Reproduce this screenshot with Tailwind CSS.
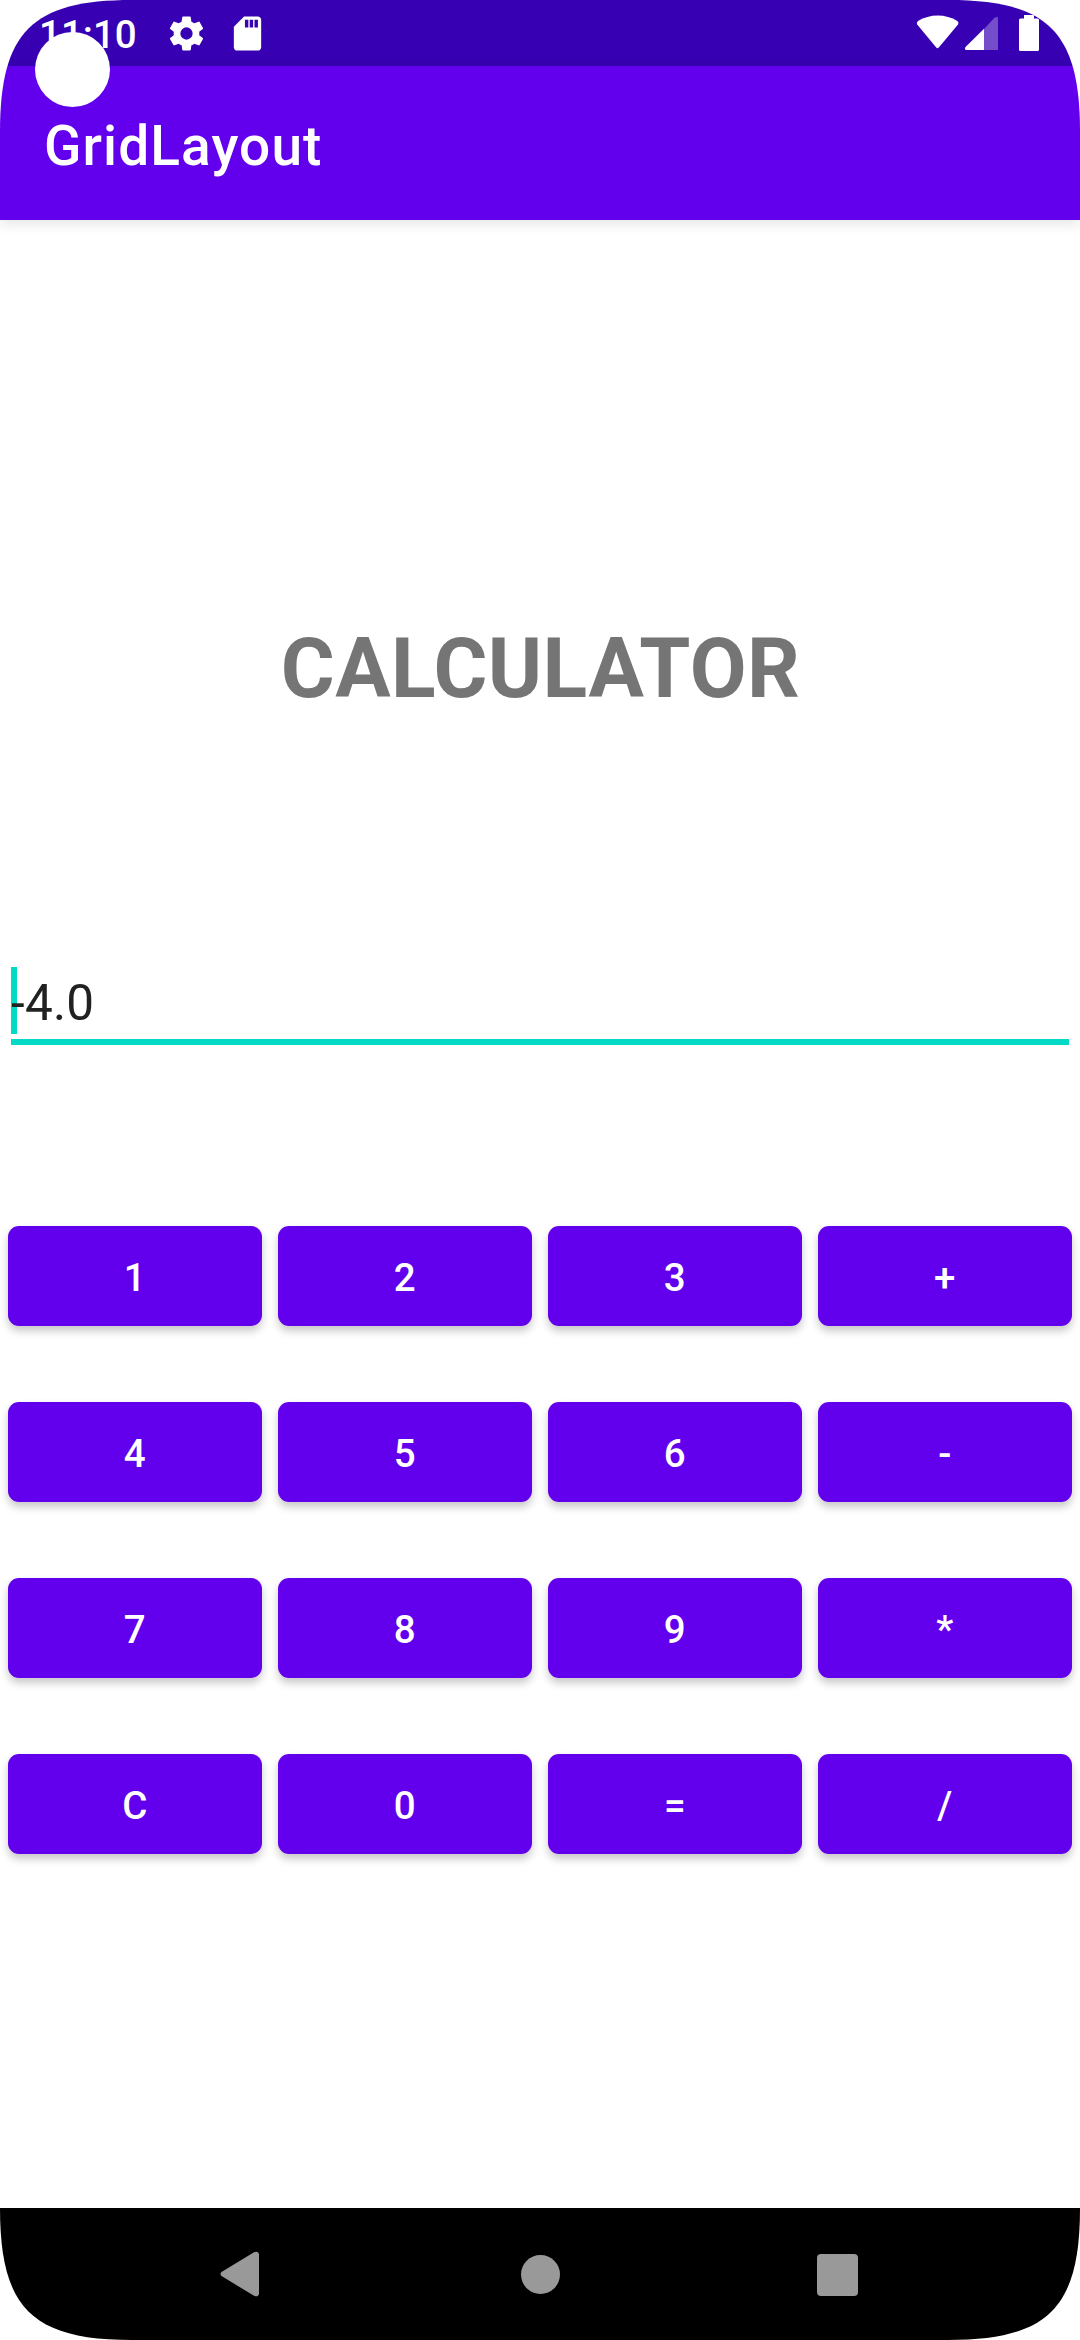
<!DOCTYPE html>
<html lang="en">
<head>
<meta charset="utf-8">
<title>GridLayout</title>
<script src="https://cdn.jsdelivr.net/npm/@tailwindcss/browser@4"></script>
</head>
<body class="bg-white">
<div class="relative flex h-[2340px] w-[1080px] flex-col overflow-hidden bg-white font-[Roboto,sans-serif] [clip-path:path('M0_132C0_32_32_0_132_0H948C1048_0_1080_32_1080_132V2208C1080_2308_1048_2340_948_2340H132C32_2340_0_2308_0_2208Z')]">

  <!-- Status bar -->
  <div class="flex h-[66px] shrink-0 items-center justify-between bg-[#3700b3] pr-[41px] pl-[39px] text-white">
    <div class="flex items-center">
      <span class="w-[127px] pt-[3px] text-[38.5px] leading-[66px] font-medium">11:10</span>
      <svg class="h-[41px] w-[41px]" viewBox="0 0 24 24" fill="currentColor"><path d="M19.5 12c0-.34-.03-.66-.07-.98l2.11-1.65c.19-.15.24-.42.12-.64l-2-3.46c-.12-.22-.39-.3-.61-.22l-2.49 1c-.52-.4-1.08-.73-1.69-.98l-.38-2.65A.49.49 0 0 0 14 2h-4c-.25 0-.46.18-.49.42l-.38 2.65c-.61.25-1.17.59-1.69.98l-2.49-1c-.23-.09-.49 0-.61.22l-2 3.46c-.13.22-.07.49.12.64l2.11 1.65c-.04.32-.07.65-.07.98s.03.66.07.98l-2.11 1.65c-.19.15-.24.42-.12.64l2 3.46c.12.22.39.3.61.22l2.49-1c.52.4 1.08.73 1.69.98l.38 2.65c.03.24.24.42.49.42h4c.25 0 .46-.18.49-.42l.38-2.65c.61-.25 1.17-.59 1.69-.98l2.49 1c.23.09.49 0 .61-.22l2-3.46c.12-.22.07-.49-.12-.64l-2.11-1.65c.04-.32.07-.64.07-.98zM12 15.6a3.6 3.6 0 1 1 0-7.2 3.6 3.6 0 0 1 0 7.2z"/></svg>
      <svg class="ml-5 h-[41px] w-[41px]" viewBox="0 0 24 24" fill="currentColor"><path d="M18 2h-8L4 8v12c0 1.100.9 2 2 2h12c1.100 0 2-.9 2-2V4c0-1.100-.9-2-2-2zm-5.500 6.500h-2V4h2v4.500zm2.800 0h-2V4h2v4.500zm2.800 0h-2V4h2v4.500z"/></svg>
    </div>
    <svg class="h-[66px] w-[124px]" viewBox="915 0 124 66" fill="currentColor">
      <path d="M917.200 24.500Q916 22.500 918 21Q927 15.500 937.700 15.500T957.400 21Q959.400 22.500 958 24.500L939 47.300Q937.500 49 936 47.300Z"/>
      <path d="M998 18.500V50H984V29L994.500 17.800Q998 16 998 18.500Z" fill-opacity=".3"/>
      <path d="M984 28.700V50H966Q964 49 965.500 47Z"/>
      <path d="M1024 15h10v3.500h3.500q1.500 0 1.500 1.500v29.500q0 1.500-1.500 1.500h-17q-1.500 0-1.500-1.500V20q0-1.500 1.500-1.500h3.500z"/>
    </svg>
  </div>

  <!-- App bar -->
  <header class="z-10 flex h-[154px] shrink-0 items-center bg-[#6200ee] px-11 shadow-[0_3px_13px_rgba(0,0,0,0.12)]">
    <h1 class="pt-[5px] text-[55px] leading-[74px] font-medium tracking-[1.1px] text-white">GridLayout</h1>
  </header>

  <main class="flex flex-1 flex-col">
    <h2 class="mt-[400px] pl-[1px] text-center text-[82.5px] leading-[98px] font-bold tracking-[0.4px] text-[#757575]">CALCULATOR</h2>

    <!-- Result field with caret -->
    <div class="relative mx-[11px] mt-[249px] h-[78px] border-b-[6px] border-[#03dac5]">
      <div class="absolute top-0 left-0 h-[67px] w-[6px] bg-[#03dac5]"></div>
      <div class="relative text-[49.5px] leading-[72px] tracking-[0.2px] text-[#212121]">-4.0</div>
    </div>

    <div class="mx-2 mt-[181px] grid grid-cols-4 gap-x-4 gap-y-[76px] text-[38.5px] font-medium tracking-[0.0893em] text-white">
      <button class="h-[100px] rounded-[11px] bg-[#6200ee] pt-[3px] pl-[3px] shadow-[0_5px_9px_rgba(0,0,0,0.22)]">1</button>
      <button class="h-[100px] rounded-[11px] bg-[#6200ee] pt-[3px] pl-[3px] shadow-[0_5px_9px_rgba(0,0,0,0.22)]">2</button>
      <button class="h-[100px] rounded-[11px] bg-[#6200ee] pt-[3px] pl-[3px] shadow-[0_5px_9px_rgba(0,0,0,0.22)]">3</button>
      <button class="h-[100px] rounded-[11px] bg-[#6200ee] pt-[3px] pl-[3px] shadow-[0_5px_9px_rgba(0,0,0,0.22)]">+</button>
      <button class="h-[100px] rounded-[11px] bg-[#6200ee] pt-[3px] pl-[3px] shadow-[0_5px_9px_rgba(0,0,0,0.22)]">4</button>
      <button class="h-[100px] rounded-[11px] bg-[#6200ee] pt-[3px] pl-[3px] shadow-[0_5px_9px_rgba(0,0,0,0.22)]">5</button>
      <button class="h-[100px] rounded-[11px] bg-[#6200ee] pt-[3px] pl-[3px] shadow-[0_5px_9px_rgba(0,0,0,0.22)]">6</button>
      <button class="h-[100px] rounded-[11px] bg-[#6200ee] pt-[3px] pl-[3px] shadow-[0_5px_9px_rgba(0,0,0,0.22)]">-</button>
      <button class="h-[100px] rounded-[11px] bg-[#6200ee] pt-[3px] pl-[3px] shadow-[0_5px_9px_rgba(0,0,0,0.22)]">7</button>
      <button class="h-[100px] rounded-[11px] bg-[#6200ee] pt-[3px] pl-[3px] shadow-[0_5px_9px_rgba(0,0,0,0.22)]">8</button>
      <button class="h-[100px] rounded-[11px] bg-[#6200ee] pt-[3px] pl-[3px] shadow-[0_5px_9px_rgba(0,0,0,0.22)]">9</button>
      <button class="h-[100px] rounded-[11px] bg-[#6200ee] pt-[3px] pl-[3px] shadow-[0_5px_9px_rgba(0,0,0,0.22)]">*</button>
      <button class="h-[100px] rounded-[11px] bg-[#6200ee] pt-[3px] pl-[3px] shadow-[0_5px_9px_rgba(0,0,0,0.22)]">C</button>
      <button class="h-[100px] rounded-[11px] bg-[#6200ee] pt-[3px] pl-[3px] shadow-[0_5px_9px_rgba(0,0,0,0.22)]">0</button>
      <button class="h-[100px] rounded-[11px] bg-[#6200ee] pt-[3px] pl-[3px] shadow-[0_5px_9px_rgba(0,0,0,0.22)]">=</button>
      <button class="h-[100px] rounded-[11px] bg-[#6200ee] pt-[3px] pl-[3px] shadow-[0_5px_9px_rgba(0,0,0,0.22)]">/</button>
    </div>
  </main>

  <!-- Navigation bar -->
  <nav class="flex h-[132px] shrink-0 items-center justify-between bg-black pr-[222px] pl-[219px]">
    <svg class="h-[46px] w-[41px]" viewBox="0 0 41 46" fill="#999"><path d="M2.500 21L35 1.200Q39.500-.5 40 3.500V42.500Q39.500 46.500 35 44.800L2.500 25Q.5 23 2.500 21Z"/></svg>
    <div class="ml-1 mt-px size-[39px] rounded-full bg-[#999]"></div>
    <div class="mt-px h-[42px] w-[41px] rounded-[4px] bg-[#999]"></div>
  </nav>

  <!-- Camera cutout -->
  <div class="absolute top-[32px] left-[35px] z-20 size-[75px] rounded-full bg-white"></div>
</div>
</body>
</html>
